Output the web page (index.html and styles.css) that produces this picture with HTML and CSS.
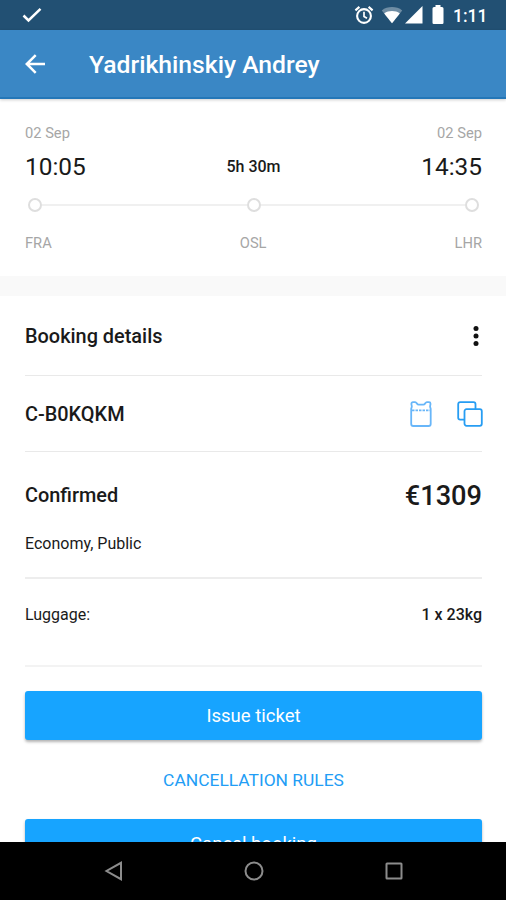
FILE: index.html
```
<!DOCTYPE html>
<html lang="en">
<head>
    <meta charset="UTF-8">
    <meta name="viewport" content="width=device-width, initial-scale=1.0">
    <title>Booking</title>
    <link rel="stylesheet" href="styles.css">
</head>
<body>

    <div class="status-bar">
        <svg class="check" width="20" height="16" viewBox="0 0 20 16">
            <path d="M1.5 8.5l5 5L18.5 1.8" fill="none" stroke="#fff" stroke-width="2.5"/>
        </svg>
        <div class="status-icons">
            <!-- alarm -->
            <svg width="20" height="20" viewBox="0 0 20 20" fill="none" stroke="#fff">
                <circle cx="10" cy="11" r="6.9" stroke-width="2.1"/>
                <path d="M10 6.8v4.6l3 1.8" stroke-width="1.7"/>
                <path d="M1.4 5.3l4-3.4M18.6 5.3l-4-3.4" stroke-width="2.2"/>
            </svg>
            <!-- wifi -->
            <svg class="wifi" width="22" height="18" viewBox="0 0 22 18">
                <path d="M11 17.2L.8 4.4C6.5 0 15.5 0 21.2 4.4z" fill="#fff" opacity=".35"/>
                <path d="M11 17.2L3.2 7.4C7.5 4.2 14.5 4.2 18.8 7.4z" fill="#fff"/>
            </svg>
            <!-- signal -->
            <svg class="signal" width="18" height="18" viewBox="0 0 18 18">
                <path d="M0 17.5L17.5 0v17.5z" fill="#fff"/>
            </svg>
            <!-- battery -->
            <svg class="battery" width="12" height="20" viewBox="0 0 12 20">
                <path d="M3.5 0h5v2H10q1.5 0 1.5 1.5v14.3q0 1.2-1.2 1.2H1.7Q.5 19 .5 17.8V3.5Q.5 2 2 2h1.5z" fill="#fff"/>
            </svg>
            <span class="clock">1:11</span>
        </div>
    </div>

    <header class="app-bar">
        <svg class="back" width="20" height="20" viewBox="0 0 20 20" fill="none" stroke="#fff" stroke-width="2.5">
            <path d="M20 10H2M10.7 1.2L1.8 10l8.9 8.8"/>
        </svg>
        <h1>Yadrikhinskiy Andrey</h1>
    </header>

    <main class="content">
        <section class="flight">
            <div class="dates">
                <span>02 Sep</span>
                <span>02 Sep</span>
            </div>
            <div class="times">
                <span class="time">10:05</span>
                <span class="duration">5h 30m</span>
                <span class="time arrival">14:35</span>
            </div>
            <div class="route">
                <span class="stop"></span>
                <span class="leg"></span>
                <span class="stop"></span>
                <span class="leg"></span>
                <span class="stop"></span>
            </div>
            <div class="airports">
                <span>FRA</span>
                <span>OSL</span>
                <span>LHR</span>
            </div>
        </section>

        <section class="booking">
            <div class="row row-title">
                <h2>Booking details</h2>
                <svg class="more" width="12" height="24" viewBox="0 0 12 24" fill="#111">
                    <circle cx="6" cy="4.5" r="2.5"/>
                    <circle cx="6" cy="12" r="2.5"/>
                    <circle cx="6" cy="19.4" r="2.5"/>
                </svg>
            </div>

            <div class="row row-code">
                <h2>C-B0KQKM</h2>
                <div class="actions">
                    <!-- ticket -->
                    <svg width="22" height="26" viewBox="0 0 22 26" fill="none" stroke="#68b6f9" stroke-width="1.8">
                        <path d="M3 1.2h2.2c1.500 0 1.700 2.500 3.400 2.500h4.800c1.700 0 1.900-2.500 3.400-2.500H19q1.500 0 1.500 1.500c0 1.200-.4 1.600-.4 2.800s.6 1.500.6 2.500V23q0 2-2 2H3.200q-2 0-2-2V8c0-1 .6-1.300.6-2.500s-.4-1.600-.4-2.800Q1.400 1.200 3 1.200z"/>
                        <path d="M2 9.3h18" stroke-dasharray="2.5 1"/>
                    </svg>
                    <!-- copy -->
                    <svg width="26" height="26" viewBox="0 0 26 26" fill="none" stroke="#279df3" stroke-width="1.8">
                        <path d="M7.5 18.7H3.2q-2 0-2-2V3.2q0-2 2-2h13.3q2 0 2 2v5"/>
                        <rect x="7.5" y="8.2" width="17.3" height="16.6" rx="2"/>
                    </svg>
                </div>
            </div>

            <div class="row row-status">
                <div>
                    <h2>Confirmed</h2>
                    <p class="fare">Economy, Public</p>
                </div>
                <span class="price">€1309</span>
            </div>

            <div class="row row-luggage">
                <span>Luggage:</span>
                <span class="value">1 x 23kg</span>
            </div>

            <button class="btn">Issue ticket</button>
            <a class="rules" href="#">CANCELLATION RULES</a>
            <button class="btn">Cancel booking</button>
        </section>
    </main>

    <nav class="nav-bar">
        <svg width="20" height="20" viewBox="0 0 20 20" fill="none" stroke="#8c8c8c" stroke-width="2">
            <path d="M17 1.8v16.4L2.5 10z"/>
        </svg>
        <svg width="20" height="20" viewBox="0 0 20 20" fill="none" stroke="#8c8c8c" stroke-width="2">
            <circle cx="10" cy="10" r="8.5"/>
        </svg>
        <svg width="20" height="20" viewBox="0 0 20 20" fill="none" stroke="#8c8c8c" stroke-width="2">
            <rect x="2.5" y="2.5" width="15" height="15" rx=".5"/>
        </svg>
    </nav>

</body>
</html>
```
FILE: styles.css
```
* {
    box-sizing: border-box;
}

body {
    font-family: Roboto, Arial, sans-serif;
    background-color: #fff;
    margin: 0;
    color: #1a1a1a;
    display: flex;
    flex-direction: column;
    height: 100vh;
    overflow: hidden;
}

h1, h2, p {
    margin: 0;
}

svg {
    display: block;
    flex: none;
}

.status-bar {
    height: 30px;
    flex: none;
    padding: 0 18px 0 22px;
    background-color: #225073;
    display: flex;
    justify-content: space-between;
    align-items: center;
}

.status-icons {
    display: flex;
    align-items: center;
}

.wifi {
    margin-left: 7px;
}

.signal {
    margin-left: 2px;
}

.battery {
    margin-left: 9px;
}

.clock {
    margin-left: 9px;
    font-size: 17.5px;
    font-weight: 500;
    line-height: 30px;
    color: #fff;
    width: 35px;
    padding-top: 1px;
    white-space: nowrap;
}

.app-bar {
    height: 69px;
    flex: none;
    padding: 0 25px;
    background-color: #3a87c5;
    border-bottom: 2px solid #2477b8;
    box-shadow: 0 1px 3px rgba(0, 0, 0, 0.2);
    display: flex;
    align-items: center;
    gap: 44px;
    position: relative;
}

.app-bar h1 {
    font-size: 24.7px;
    font-weight: 500;
    line-height: 30px;
    color: #fff;
    padding-top: 3px;
}

.back {
    margin-top: 1px;
}

.content {
    flex: 1;
    min-height: 0;
    overflow: hidden;
}

.flight {
    height: 197px;
    padding: 24px 24px 0 25px;
    border-bottom: 20px solid #f9f9f9;
}

.dates,
.airports {
    display: flex;
    justify-content: space-between;
    font-size: 14.7px;
    line-height: 20px;
    color: #a6a6a6;
}

.times {
    display: grid;
    grid-template-columns: 1fr auto 1fr;
    align-items: center;
    height: 30px;
    margin-top: 9px;
}

.time {
    font-size: 24.4px;
    line-height: 30px;
}

.arrival {
    text-align: right;
}

.duration {
    font-size: 16px;
    font-weight: 500;
    padding-bottom: 2px;
}

.route {
    display: flex;
    align-items: center;
    margin: 16px 3px 0;
}

.stop {
    width: 14px;
    height: 14px;
    border: 2px solid #dedede;
    border-radius: 50%;
}

.leg {
    flex: 1;
    height: 2px;
    background-color: #f0f0f0;
}

.airports {
    margin-top: 21px;
}

.booking {
    padding: 0 24px 0 25px;
}

.row {
    display: flex;
    justify-content: space-between;
    align-items: center;
    border-bottom: 1px solid #e9e9e9;
}

.row h2 {
    font-size: 19.9px;
    font-weight: 500;
    line-height: 24px;
    padding-top: 1px;
}

.row-title {
    height: 80px;
}

.row-code {
    height: 76px;
}

.row-title h2,
.row-code h2 {
    padding-top: 3px;
}

.actions {
    display: flex;
    gap: 25px;
    margin-right: -1px;
}

.row-status {
    height: 127px;
    padding-top: 31px;
    align-items: flex-start;
    border-bottom: 2px solid #ededed;
}

.fare {
    margin-top: 26px;
    font-size: 16px;
    line-height: 20px;
}

.price {
    font-size: 27.2px;
    font-weight: 500;
    line-height: 26px;
}

.row-luggage {
    height: 88px;
    padding-top: 26px;
    align-items: flex-start;
    font-size: 16px;
    line-height: 20px;
    border-bottom: 2px solid #f3f3f3;
}

.value {
    font-weight: 500;
}

.btn {
    display: block;
    width: 100%;
    height: 49px;
    margin-top: 24px;
    padding: 1px 0 0;
    font-family: inherit;
    font-size: 18.5px;
    font-weight: 400;
    color: #fff;
    background-color: #17a4ff;
    border: none;
    border-radius: 3px;
    box-shadow: 0 2px 3px rgba(0, 0, 0, 0.3);
    cursor: pointer;
}

.rules {
    display: block;
    margin: 30px 0 29px;
    font-size: 17.4px;
    line-height: 20px;
    text-align: center;
    color: #229df5;
    text-decoration: none;
}

.nav-bar {
    height: 58px;
    flex: none;
    padding: 0 102px 0 104px;
    background-color: #000;
    display: flex;
    justify-content: space-between;
    align-items: center;
}
```
